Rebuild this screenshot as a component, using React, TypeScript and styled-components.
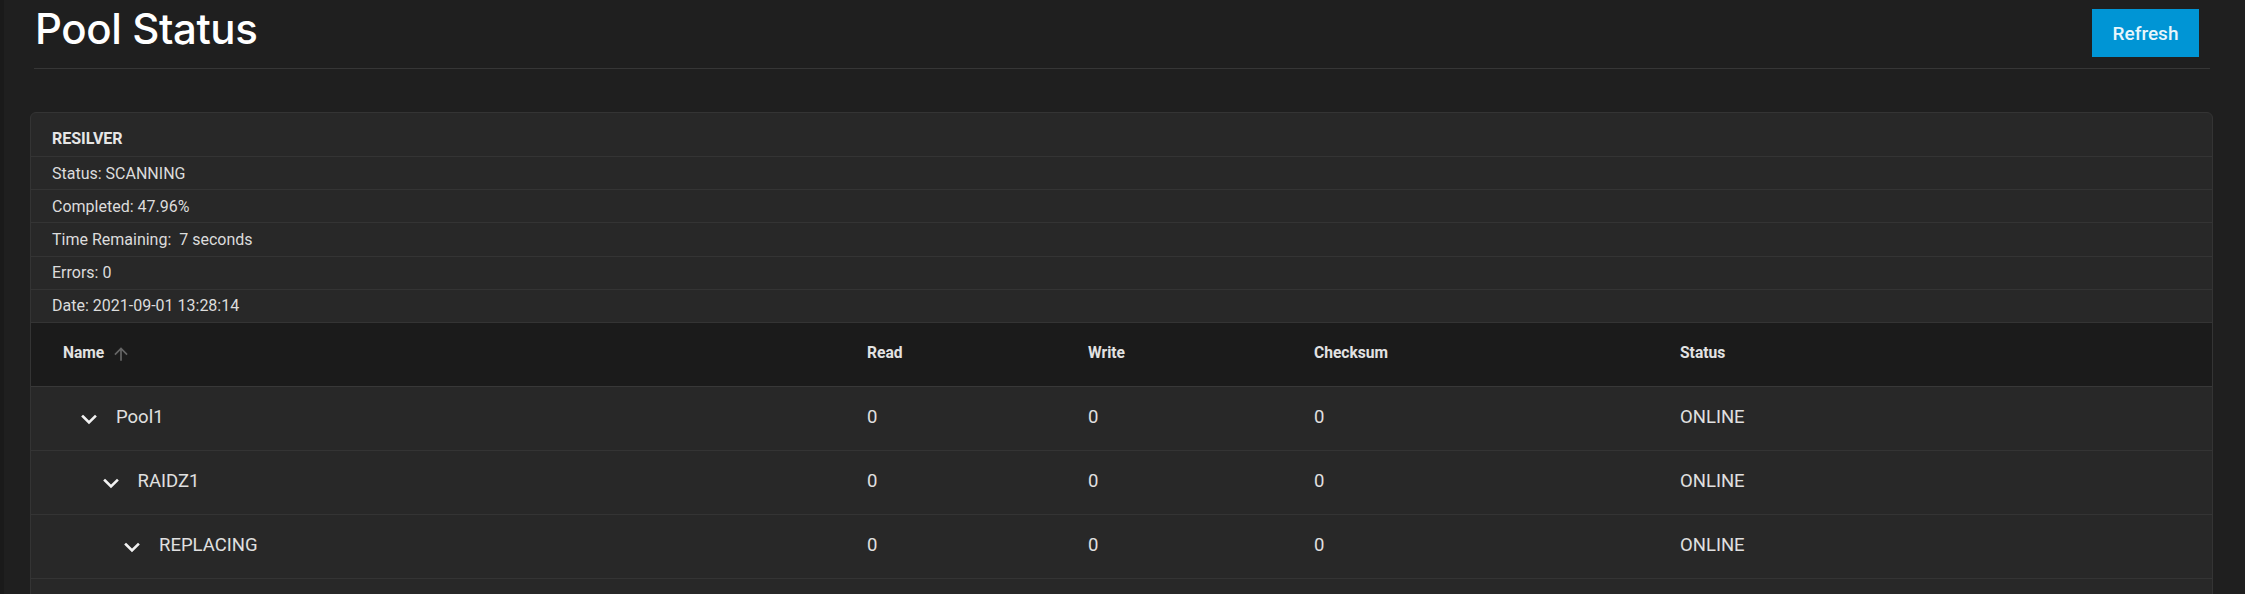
import React from "react";
import styled, { createGlobalStyle } from "styled-components";

const GlobalStyle = createGlobalStyle`
  html, body {
    margin: 0;
    padding: 0;
    background: #1f1f1f;
    font-family: Roboto, "Noto Sans", sans-serif;
    color: #e6e6e6;
  }
  * { box-sizing: border-box; }
`;

const Page = styled.div`
  display: flex;
  min-height: 594px;
  background: #1f1f1f;
`;

const SideEdge = styled.div`
  width: 4px;
  flex: none;
  background: #1a1a1a;
`;

const Main = styled.main`
  flex: 1;
  display: flex;
  flex-direction: column;
  padding: 0 32px 0 26px;
`;

const PageHeader = styled.header`
  display: flex;
  align-items: flex-start;
  justify-content: space-between;
  height: 69px;
  margin: 0 3px 0 4px;
  padding: 9px 11px 0 0;
  border-bottom: 1px solid #363636;
`;

const Title = styled.h1`
  margin: -1px 0 0 0;
  padding-left: 1px;
  font-family: Inter, "Noto Sans", sans-serif;
  font-weight: 500;
  font-size: 42px;
  line-height: 42px;
  color: #ffffff;
  letter-spacing: -0.4px;
`;

const RefreshButton = styled.button`
  width: 107px;
  height: 48px;
  border: none;
  border-radius: 0;
  background: #0095d5;
  color: #e8f6fc;
  font-family: Roboto, sans-serif;
  font-weight: 500;
  font-size: 19px;
  cursor: pointer;
  padding: 0;
`;

const Card = styled.section`
  margin-top: 43px;
  padding-bottom: 40px;
  background: #282828;
  border: 1px solid #343434;
  border-radius: 6px;
  overflow: hidden;
`;

const ScanHeader = styled.div`
  height: 44px;
  display: flex;
  align-items: flex-end;
  padding: 0 0 8px 21px;
  font-weight: 700;
  font-size: 16px;
  color: #e6e6e6;
  border-bottom: 1px solid #343434;
`;

const ScanRow = styled.div`
  height: 33.2px;
  display: flex;
  align-items: center;
  padding-left: 21px;
  font-size: 16px;
  color: #dcdcdc;
  border-bottom: 1px solid #343434;
`;

const cols = "804px 221px 226px 366px 1fr";

const HeadRow = styled.div`
  display: grid;
  grid-template-columns: ${cols};
  align-items: center;
  height: 64px;
  padding-left: 32px;
  padding-bottom: 2px;
  background: #1b1b1b;
  border-bottom: 1px solid #383838;
`;

const HeadCell = styled.div`
  display: flex;
  align-items: center;
  gap: 7px;
  font-weight: 700;
  font-size: 15.6px;
  color: #e2e2e2;
`;

const BodyRow = styled.div`
  display: grid;
  grid-template-columns: ${cols};
  align-items: center;
  height: 64px;
  padding-left: 32px;
  padding-bottom: 2px;
  border-bottom: 1px solid #343434;
  font-size: 18.5px;
  color: #e0e0e0;
`;

const NameCell = styled.div<{ $level: number }>`
  display: flex;
  align-items: center;
  gap: 19px;
  padding-left: ${(p) => 18 + p.$level * 21.5}px;
`;

const Chevron = styled.svg`
  width: 16px;
  height: 11px;
  margin-top: 5px;
  flex: none;
`;

const Cell = styled.div``;

const SortArrow = () => (
  <svg width="20" height="20" viewBox="0 0 24 24" style={{ marginTop: 1 }}>
    <path
      fill="#666666"
      d="M4 12l1.41 1.41L11 7.83V20h2V7.83l5.58 5.59L20 12l-8-8-8 8z"
    />
  </svg>
);

const ExpandIcon = () => (
  <Chevron viewBox="0 0 16 11">
    <path
      d="M2 2.5 L8 8.5 L14 2.5"
      fill="none"
      stroke="#f2f2f2"
      strokeWidth="2.6"
      strokeLinecap="square"
    />
  </Chevron>
);

const scan = [
  "Status: SCANNING",
  "Completed: 47.96%",
  "Time Remaining:\u00a0 7 seconds",
  "Errors: 0",
  "Date: 2021-09-01 13:28:14",
];

const rows = [
  { name: "Pool1", level: 0 },
  { name: "RAIDZ1", level: 1 },
  { name: "REPLACING", level: 2 },
];

export default function App() {
  return (
    <>
      <GlobalStyle />
      <Page>
        <SideEdge />
        <Main>
          <PageHeader>
            <Title>Pool Status</Title>
            <RefreshButton>Refresh</RefreshButton>
          </PageHeader>
          <Card>
            <ScanHeader>RESILVER</ScanHeader>
            {scan.map((s) => (
              <ScanRow key={s}>{s}</ScanRow>
            ))}
            <HeadRow>
              <HeadCell>
                Name <SortArrow />
              </HeadCell>
              <HeadCell>Read</HeadCell>
              <HeadCell>Write</HeadCell>
              <HeadCell>Checksum</HeadCell>
              <HeadCell>Status</HeadCell>
            </HeadRow>
            {rows.map((r) => (
              <BodyRow key={r.name}>
                <NameCell $level={r.level}>
                  <ExpandIcon />
                  <span>{r.name}</span>
                </NameCell>
                <Cell>0</Cell>
                <Cell>0</Cell>
                <Cell>0</Cell>
                <Cell>ONLINE</Cell>
              </BodyRow>
            ))}
          </Card>
        </Main>
      </Page>
    </>
  );
}
